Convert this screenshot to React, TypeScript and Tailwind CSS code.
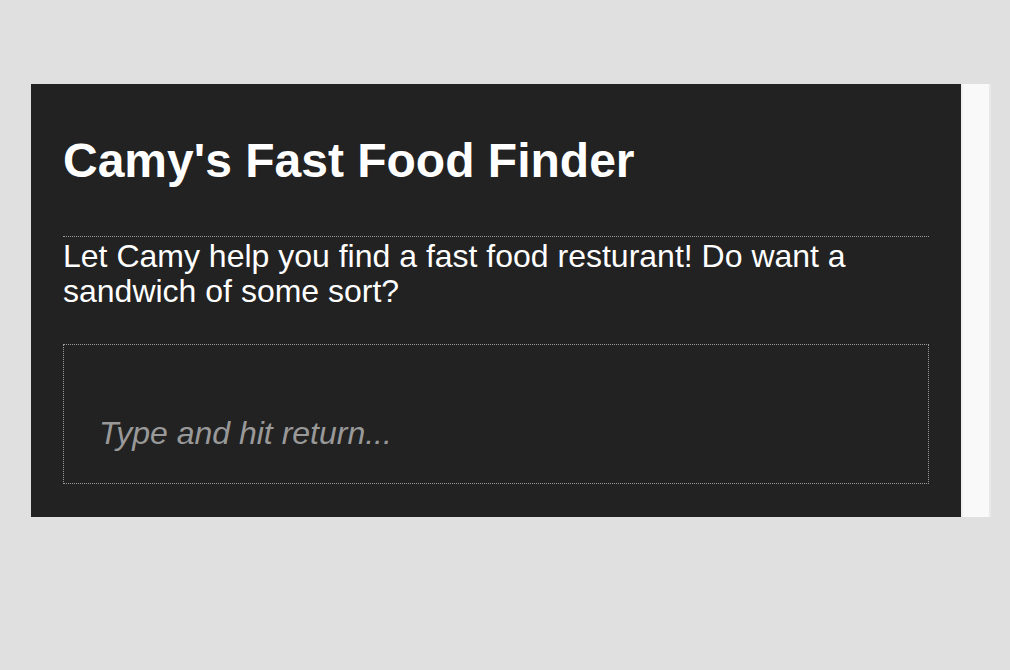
import React from "react";

export default function App() {
  return (
    <div className="min-h-[670px] w-[1010px] bg-[#e1e0e0] pt-[84px] pl-[31px]" style={{ fontFamily: '"Liberation Sans", Arial, sans-serif' }}>
      <div className="flex">
        <div className="w-[930px] bg-[#222222] px-[32px] pt-[49px] pb-[33px]">
          <h1 className="m-0 text-[48px] font-bold leading-[55px] text-white">Camy's Fast Food Finder</h1>
          <p className="mt-[48px] border-t border-dotted border-[#9a9a9a] pt-[2px] text-[32px] leading-[35px] text-white">
            Let Camy help you find a fast food resturant! Do want a sandwich of some sort?
          </p>
          <div className="mt-[35px] h-[140px] border border-dotted border-[#9a9a9a] pl-[35px] pt-[64px]">
            <input
              className="w-full bg-transparent text-[32px] italic text-white outline-none placeholder:text-[#999999]"
              placeholder="Type and hit return..."
            />
          </div>
        </div>
        <div className="w-[30px] border-l-2 border-r-2 border-l-[#efefef] border-r-[#e9e9e9] bg-[#f9f9f9]" />
      </div>
    </div>
  );
}
